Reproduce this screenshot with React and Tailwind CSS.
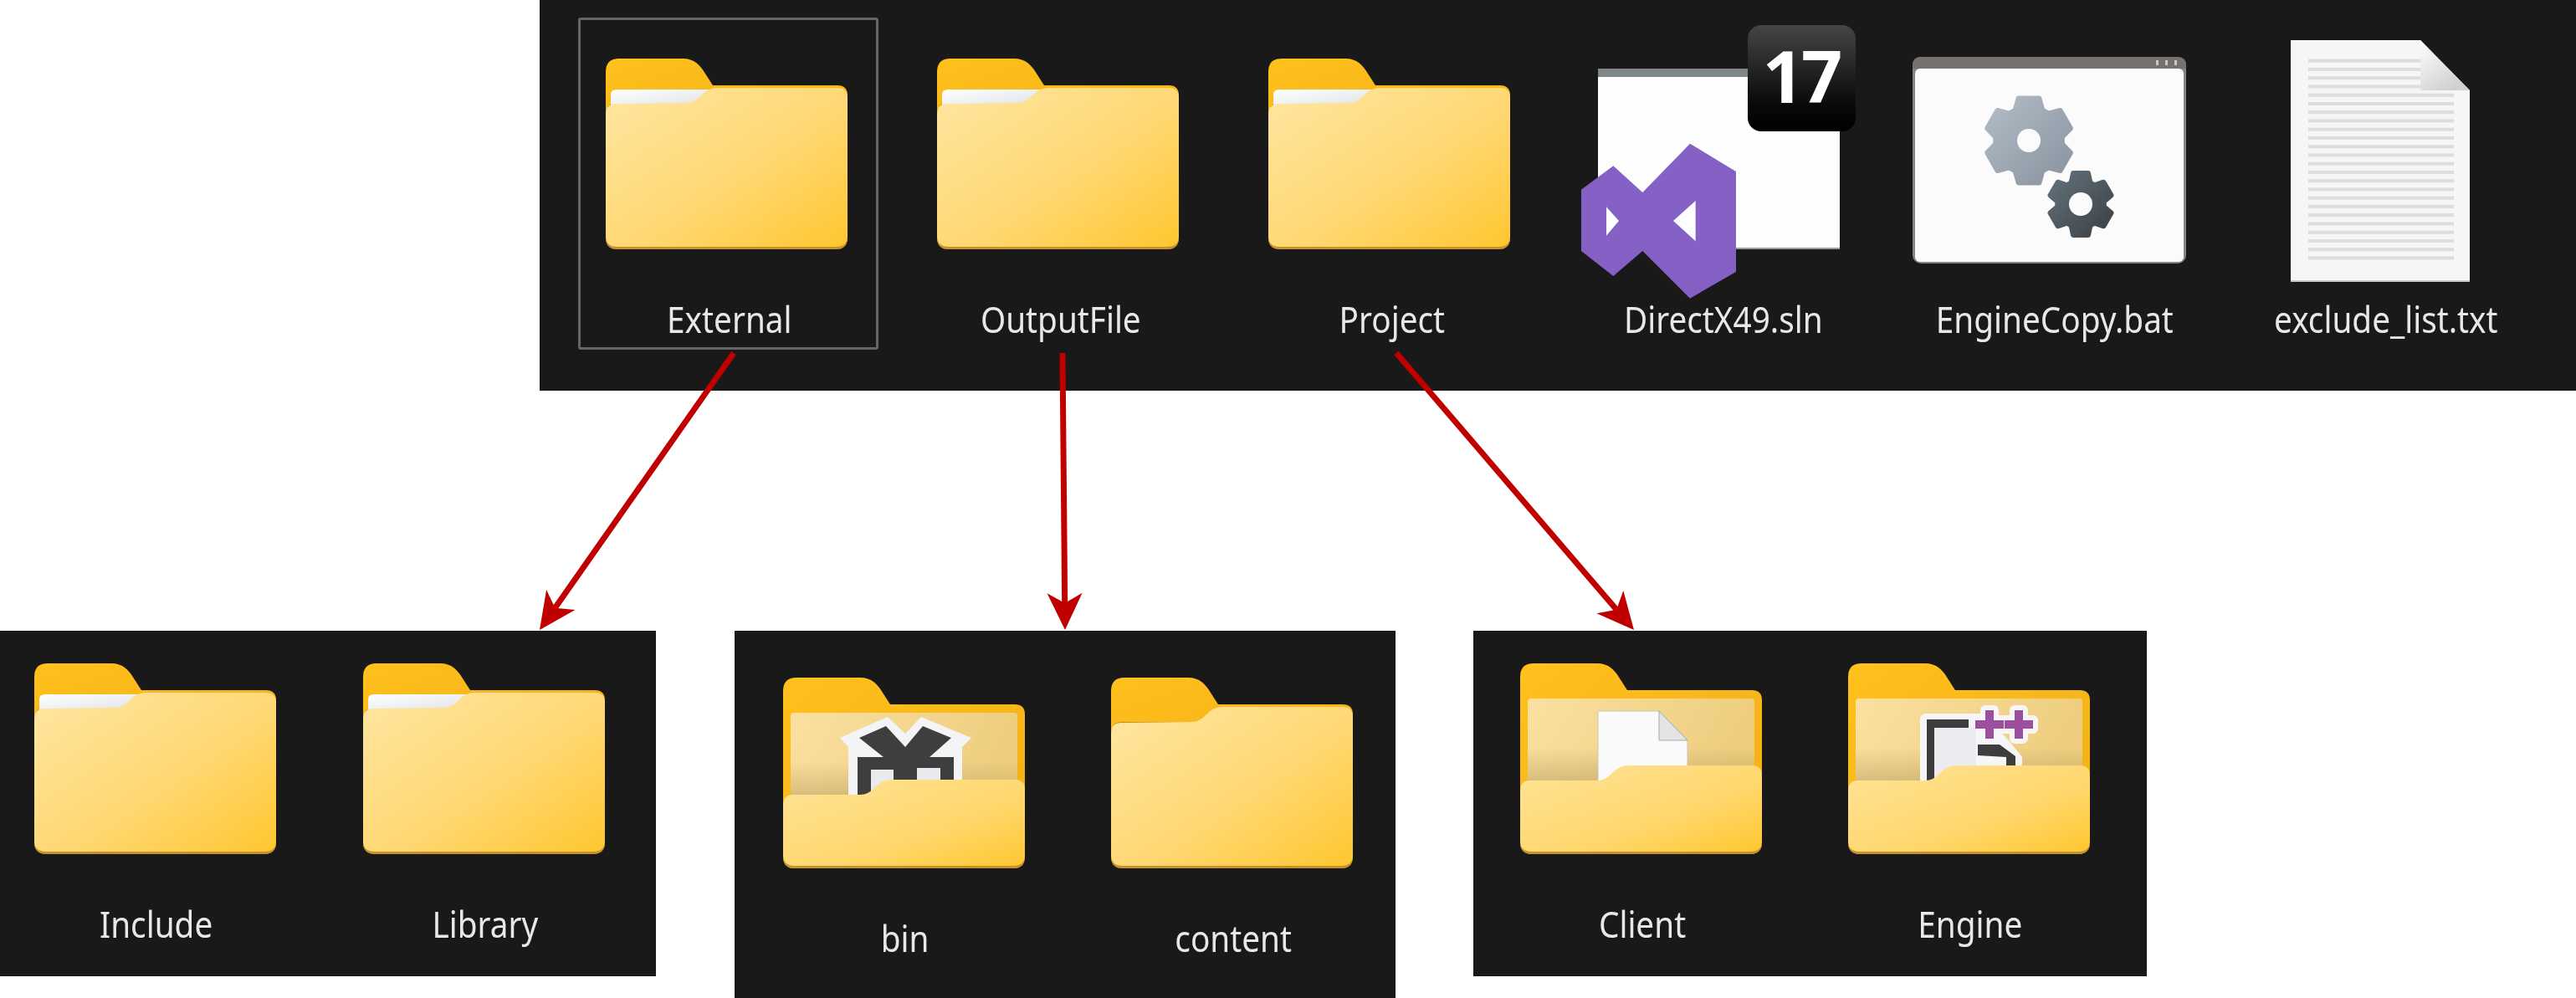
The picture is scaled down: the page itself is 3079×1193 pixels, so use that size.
import React from "react";

const FONT = "font-['Noto_Sans','Noto_Sans_CJK_KR',sans-serif]";

function Label({ children }) {
  return (
    <div className={`${FONT} text-[44px] leading-[48px] h-[48px] text-[#e8e8e8] scale-x-[0.88] whitespace-nowrap text-center pl-[3px] antialiased`}>
      {children}
    </div>
  );
}

const BODY_PATH =
  "M0 68 Q0 55 12 55 L96 54 Q106 54 114 45 Q122 36 134 36 L277 36 Q289 36 289 48 L289 214 Q289 228 275 228 L14 228 Q0 228 0 214 Z";
const FRONT_PATH =
  "M0 153 Q0 140 12 140 L92 140 Q102 140 110 131 Q118 122 130 122 L277 122 Q289 122 289 134 L289 214 Q289 228 275 228 L14 228 Q0 228 0 214 Z";
const BACK_TOP =
  "L0 16 Q0 0 16 0 L92 0 C106 0 113 8 119 18 L128 32 L277 32 Q289 32 289 44";

function Grads({ id }) {
  return (
    <defs>
      <linearGradient id={`${id}-tab`} x1="0" y1="0" x2="1" y2="1">
        <stop offset="0" stopColor="#ffc11d" />
        <stop offset="1" stopColor="#f1ae16" />
      </linearGradient>
      <linearGradient id={`${id}-body`} x1="0" y1="0" x2="1" y2="1">
        <stop offset="0" stopColor="#ffe6a2" />
        <stop offset="0.55" stopColor="#ffd873" />
        <stop offset="1" stopColor="#ffc62e" />
      </linearGradient>
      <linearGradient id={`${id}-front`} x1="0" y1="0" x2="1" y2="1">
        <stop offset="0" stopColor="#ffe397" />
        <stop offset="0.6" stopColor="#ffd76c" />
        <stop offset="1" stopColor="#ffc62e" />
      </linearGradient>
      <linearGradient id={`${id}-inner`} x1="0" y1="0" x2="1" y2="0.2">
        <stop offset="0" stopColor="#fbe0a0" />
        <stop offset="1" stopColor="#eecd7e" />
      </linearGradient>
      <linearGradient id={`${id}-shade`} x1="0" y1="0" x2="0" y2="1">
        <stop offset="0" stopColor="#a08850" stopOpacity="0" />
        <stop offset="1" stopColor="#a08850" stopOpacity="0.4" />
      </linearGradient>
      <linearGradient id={`${id}-paper`} x1="0" y1="0" x2="1" y2="1">
        <stop offset="0" stopColor="#ffffff" />
        <stop offset="1" stopColor="#dfe2e5" />
      </linearGradient>
    </defs>
  );
}

function ClosedFolder({ id, paper }) {
  return (
    <g>
      <Grads id={id} />
      <path d={`M0 100 ${BACK_TOP} L289 100 Z`} fill={`url(#${id}-tab)`} />
      <path d="M0 68 Q0 53 12 53 L289 53 L289 214 Q289 228 275 228 L14 228 Q0 228 0 214 Z" fill="#b98a2c" />
      {paper && <path d="M6 56 L6 43 Q6 37 13 37 L128 37 L112 50 Q106 54 98 54 Z" fill={`url(#${id}-paper)`} />}
      <path d={BODY_PATH} transform="translate(0 -1)" fill={`url(#${id}-body)`} />
      <path d="M0 212 Q0 225 14 225 L275 225 Q289 225 289 212 L289 214 Q289 228 275 228 L14 228 Q0 228 0 214 Z" fill="#c5922e" />
    </g>
  );
}

function OpenFolder({ id, children }) {
  return (
    <g>
      <Grads id={id} />
      <path d={`M0 210 ${BACK_TOP} L289 210 Z`} fill={`url(#${id}-tab)`} />
      <rect x="9" y="42" width="271" height="102" rx="4" fill={`url(#${id}-inner)`} />
      <rect x="9" y="100" width="271" height="44" fill={`url(#${id}-shade)`} />
      {children}
      <path d={FRONT_PATH} fill={`url(#${id}-front)`} />
      <path d="M0 212 Q0 225 14 225 L275 225 Q289 225 289 212 L289 214 Q289 228 275 228 L14 228 Q0 228 0 214 Z" fill="#c5922e" />
    </g>
  );
}

function FolderSvg({ children }) {
  return (
    <svg viewBox="0 0 289 228" className="w-[289px] h-[228px] block blur-[0.6px]">
      {children}
    </svg>
  );
}

function BinArt() {
  return (
    <g>
      <path d="M68 72 L125 47 L146 67 L165 47 L225 72 L214 83 L214 145 L78 145 L78 83 Z" fill="#f4f4f6" />
      <path d="M91 72 L123 58 L146 83 L167 58 L201 72 L175 95 L204 95 L204 130 L89 145 L89 95 L120 95 Z" fill="#3e3e3e" />
      <rect x="105" y="110" width="27" height="35" fill="#e9e9ee" />
      <rect x="160" y="108" width="28" height="20" fill="#e9e9ee" />
    </g>
  );
}

function DocArt() {
  return (
    <g>
      <path d="M93 57 L166 57 L200 92 L200 145 L93 145 Z" fill="#fafafa" stroke="#c9c4b8" strokeWidth="1" />
      <path d="M166 57 L166 92 L200 92 Z" fill="#e4e4e4" stroke="#a9a9a9" strokeWidth="1" />
    </g>
  );
}

const PLUS_A = "M164 56 h10 v12 h12 v10 h-12 v12 h-10 v-12 h-12 v-10 h12 Z";
const PLUS_B = "M199 56 h10 v12 h12 v10 h-12 v12 h-10 v-12 h-12 v-10 h12 Z";

function CppArt() {
  return (
    <g>
      <path d="M86 68 Q86 60 94 60 L160 60 L190 90 L208 112 L208 145 L86 145 Z" fill="#f6f6f8" />
      <path d={PLUS_A} fill="#f6f6f8" stroke="#f6f6f8" strokeWidth="12" strokeLinejoin="round" />
      <path d={PLUS_B} fill="#f6f6f8" stroke="#f6f6f8" strokeWidth="12" strokeLinejoin="round" />
      <path d="M94 67 L144 67 L144 77 L103 77 L103 145 L94 145 Z" fill="#3d3d3d" />
      <rect x="103" y="77" width="50" height="68" fill="#ececf0" />
      <path d="M155 97 L181 97 L200 111 L200 125 L189 125 L189 112 L155 110 Z" fill="#3d3d3d" />
      <path d={PLUS_A} fill="#9b4f9e" />
      <path d={PLUS_B} fill="#9b4f9e" />
    </g>
  );
}

function gearPath(cx, cy, rOut, rIn) {
  let d = "";
  for (let i = 0; i < 6; i++) {
    const a = (-90 + i * 60) * (Math.PI / 180);
    const pts = [
      [rIn, a - 0.42],
      [rOut, a - 0.24],
      [rOut, a + 0.24],
      [rIn, a + 0.42],
    ];
    for (const [r, t] of pts) {
      const x = (cx + r * Math.cos(t)).toFixed(1);
      const y = (cy + r * Math.sin(t)).toFixed(1);
      d += `${d ? "L" : "M"}${x} ${y} `;
    }
  }
  return d + "Z";
}

function SlnIcon() {
  return (
    <svg viewBox="0 0 359 330" className="w-[359px] h-[330px] block overflow-visible blur-[0.5px]">
      <defs>
        <linearGradient id="badge" x1="0" y1="0" x2="0" y2="1">
          <stop offset="0" stopColor="#454545" />
          <stop offset="0.75" stopColor="#090909" />
          <stop offset="1" stopColor="#000000" />
        </linearGradient>
      </defs>
      <rect x="31" y="61" width="289" height="216" fill="#fdfdfd" />
      <rect x="31" y="61" width="289" height="10" fill="#808789" />
      <rect x="31" y="275" width="289" height="2" fill="#9a9a9a" />
      <rect x="210" y="9" width="129" height="127" rx="16" fill="url(#badge)" />
      <text x="274" y="102" textAnchor="middle" fontFamily="'Open Sans','Noto Sans',sans-serif" fontWeight="700" fontSize="86" letterSpacing="-3" fill="#ffffff">
        17
      </text>
      <g transform="translate(1 -11) scale(0.3333)">
        <path
          fillRule="evenodd"
          fill="#8661c5"
          d="M145 565 L250 660 L420 485 L585 585 L585 945 L420 1040 L250 870 L145 960 L30 870 L30 650 Z M120 712 L120 815 L165 762 Z M440 690 L360 762 L440 835 Z"
        />
      </g>
    </svg>
  );
}

function BatIcon() {
  return (
    <svg viewBox="0 0 359 330" className="w-[359px] h-[330px] block blur-[0.5px]">
      <defs>
        <linearGradient id="gearA" x1="0" y1="0" x2="1" y2="1">
          <stop offset="0" stopColor="#b3bdc8" />
          <stop offset="1" stopColor="#89939f" />
        </linearGradient>
        <linearGradient id="gearB" x1="0" y1="0" x2="1" y2="1">
          <stop offset="0" stopColor="#63727c" />
          <stop offset="1" stopColor="#3c4044" />
        </linearGradient>
      </defs>
      <rect x="11" y="47" width="327" height="247" rx="10" fill="#88857f" />
      <rect x="14" y="61" width="321" height="231" rx="6" fill="#fbfbfb" />
      <path d="M11 61 L11 57 Q11 47 21 47 L328 47 Q338 47 338 57 L338 61 Z" fill="#76736e" />
      <rect x="302" y="51" width="3" height="6" fill="#c9c8c5" />
      <rect x="313" y="51" width="3" height="6" fill="#c9c8c5" />
      <rect x="324" y="51" width="3" height="6" fill="#c9c8c5" />
      <path d={gearPath(150, 147, 52, 40)} fill="url(#gearA)" stroke="url(#gearA)" strokeWidth="6" strokeLinejoin="round" />
      <circle cx="150" cy="147" r="14" fill="#fbfbfb" />
      <path d={gearPath(212, 223, 38, 28)} fill="url(#gearB)" stroke="url(#gearB)" strokeWidth="6" strokeLinejoin="round" />
      <circle cx="212" cy="223" r="14" fill="#fbfbfb" />
    </svg>
  );
}

const LINE_YS = Array.from({ length: 24 }, (_, i) => 51.7 + i * 10.25);

function TxtIcon() {
  return (
    <svg viewBox="0 0 359 330" className="w-[359px] h-[330px] block blur-[0.5px]">
      <defs>
        <linearGradient id="fold" x1="0" y1="0" x2="0.6" y2="1">
          <stop offset="0" stopColor="#ffffff" />
          <stop offset="1" stopColor="#cfd0d0" />
        </linearGradient>
      </defs>
      <path d="M67 27 L222 27 L281 87 L281 316 L67 316 Z" fill="#f5f6f7" />
      <rect x="67" y="314" width="214" height="2" fill="#c8c8c8" />
      {LINE_YS.map((y, i) => (
        <rect key={i} x="88" y={y - 2} width={i < 4 ? 134 : 174} height="4" fill="#dcdedd" />
      ))}
      <path d="M222 27 L281 87 L222 87 Z" fill="url(#fold)" />
    </svg>
  );
}

function TopCell({ name, selected, children }) {
  return (
    <div
      className={
        selected
          ? "w-[359px] h-[397px] flex flex-col rounded-[3px] outline-[3px] outline-offset-[-3px] outline-[#666666]"
          : "w-[359px] h-[397px] flex flex-col"
      }
    >
      <div className="h-[330px]">{children}</div>
      <div className="mt-[6px]">
        <Label>{name}</Label>
      </div>
    </div>
  );
}

function TopFolder({ id }) {
  return (
    <div className="pl-[33px] pt-[49px]">
      <FolderSvg>
        <ClosedFolder id={id} paper />
      </FolderSvg>
    </div>
  );
}

function BottomItem({ name, children }) {
  return (
    <div className="w-[289px] flex flex-col items-center">
      <FolderSvg>{children}</FolderSvg>
      <div className="mt-[59px]">
        <Label>{name}</Label>
      </div>
    </div>
  );
}

function Arrow({ x1, y1, x2, y2 }) {
  const dx = x2 - x1;
  const dy = y2 - y1;
  const len = Math.hypot(dx, dy);
  const ux = dx / len;
  const uy = dy / len;
  const nx = -uy;
  const ny = ux;
  const bx = x2 - ux * 44;
  const by = y2 - uy * 44;
  const mx = x2 - ux * 32;
  const my = y2 - uy * 32;
  const pts = [
    [x2, y2],
    [bx + nx * 21, by + ny * 21],
    [mx, my],
    [bx - nx * 21, by - ny * 21],
  ]
    .map((p) => p.map((v) => v.toFixed(1)).join(","))
    .join(" ");
  return (
    <g>
      <line x1={x1} y1={y1} x2={mx} y2={my} stroke="#c00000" strokeWidth="7" />
      <polygon points={pts} fill="#c00000" />
    </g>
  );
}

export default function App() {
  return (
    <div className="relative w-[3079px] h-[1193px] bg-white overflow-hidden">
      <div className="ml-[645px] h-[467px] bg-[#191919] pt-[21px] pl-[46px] flex gap-[37px]">
        <TopCell name="External" selected>
          <TopFolder id="t1" />
        </TopCell>
        <TopCell name="OutputFile">
          <TopFolder id="t2" />
        </TopCell>
        <TopCell name="Project">
          <TopFolder id="t3" />
        </TopCell>
        <TopCell name="DirectX49.sln">
          <SlnIcon />
        </TopCell>
        <TopCell name="EngineCopy.bat">
          <BatIcon />
        </TopCell>
        <TopCell name="exclude_list.txt">
          <TxtIcon />
        </TopCell>
      </div>

      <div className="mt-[287px] flex items-start">
        <div className="w-[784px] h-[413px] bg-[#191919] pl-[41px] pt-[39px] flex gap-[104px]">
          <BottomItem name="Include">
            <ClosedFolder id="a1" paper />
          </BottomItem>
          <BottomItem name="Library">
            <ClosedFolder id="a2" paper />
          </BottomItem>
        </div>
        <div className="ml-[94px] w-[790px] h-[439px] bg-[#191919] pl-[58px] pt-[56px] flex gap-[103px]">
          <BottomItem name="bin">
            <OpenFolder id="b1">
              <BinArt />
            </OpenFolder>
          </BottomItem>
          <BottomItem name="content">
            <ClosedFolder id="b2" />
          </BottomItem>
        </div>
        <div className="ml-[93px] w-[805px] h-[413px] bg-[#191919] pl-[56px] pt-[39px] flex gap-[103px]">
          <BottomItem name="Client">
            <OpenFolder id="c1">
              <DocArt />
            </OpenFolder>
          </BottomItem>
          <BottomItem name="Engine">
            <OpenFolder id="c2">
              <CppArt />
            </OpenFolder>
          </BottomItem>
        </div>
      </div>

      <svg viewBox="0 0 3079 1193" className="absolute inset-0 w-[3079px] h-[1193px] pointer-events-none">
        <Arrow x1={877} y1={422} x2={645} y2={753} />
        <Arrow x1={1270} y1={422} x2={1273} y2={753} />
        <Arrow x1={1669} y1={422} x2={1953} y2={753} />
      </svg>
    </div>
  );
}
